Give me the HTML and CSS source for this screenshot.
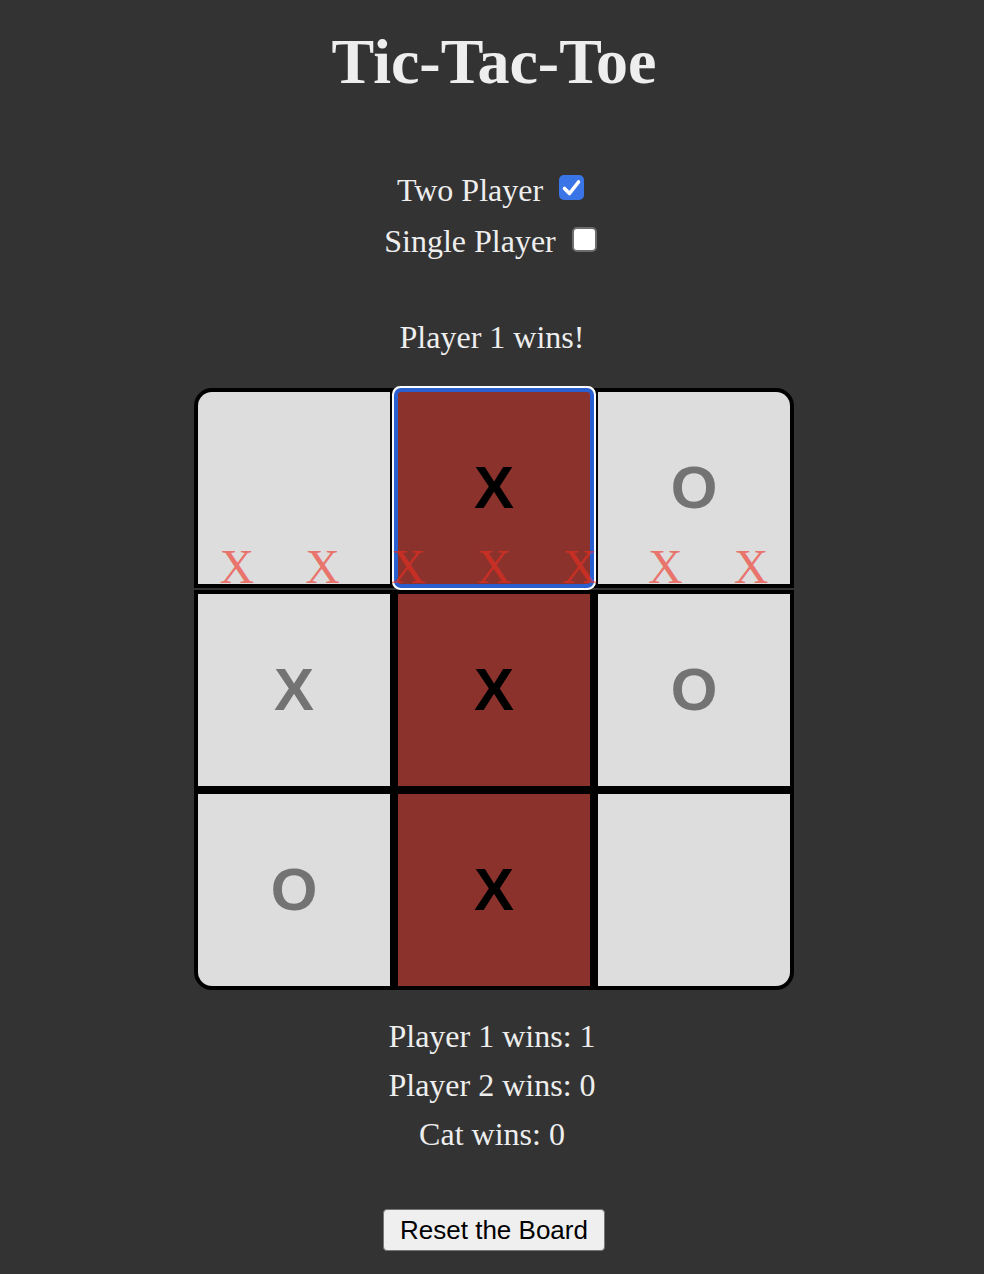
FILE: index.html
```html
<!DOCTYPE html>
<html lang="en">
<head>
<meta charset="utf-8">
<title>Tic-Tac-Toe</title>
<link rel="stylesheet" href="styles.css">
</head>
<body>
<main class="page">
  <h1 class="title">Tic-Tac-Toe</h1>

  <div class="modes">
    <label class="mode">
      <span class="mode-label">Two Player</span>
      <span class="box box-checked">
        <svg viewBox="0 0 25 25" width="25" height="25"><path d="M5.5 13.5 L10.5 18.5 L19.5 7" fill="none" stroke="#fff" stroke-width="3.6" stroke-linecap="round" stroke-linejoin="round"/></svg>
      </span>
    </label>
    <label class="mode">
      <span class="mode-label">Single Player</span>
      <span class="box box-empty"></span>
    </label>
  </div>

  <p class="status">Player 1 wins!</p>

  <div class="board">
    <div class="cell light tl"></div>
    <div class="cell win focused">X</div>
    <div class="cell light tr">O</div>
    <div class="sep sep-mark"></div>
    <div class="cell light">X</div>
    <div class="cell win">X</div>
    <div class="cell light">O</div>
    <div class="sep"></div>
    <div class="cell light bl">O</div>
    <div class="cell win">X</div>
    <div class="cell light br"></div>
    <div class="marks">
      <span>X</span><span>X</span><span>X</span><span>X</span><span>X</span><span>X</span><span>X</span>
    </div>
  </div>

  <div class="scores">
    <p class="score">Player 1 wins: 1</p>
    <p class="score">Player 2 wins: 0</p>
    <p class="score">Cat wins: 0</p>
  </div>

  <button class="reset" type="button">Reset the Board</button>
</main>
</body>
</html>
```

FILE: styles.css
```css
html, body {
  margin: 0;
  padding: 0;
  background: #333333;
}

body {
  font-family: "Liberation Serif", "Times New Roman", serif;
  color: #eeeeee;
}

.page {
  display: flex;
  flex-direction: column;
  align-items: center;
  padding-bottom: 20px;
}

.title {
  margin: 25px 0 0 4px;
  font-size: 64px;
  line-height: 74px;
  font-weight: bold;
  color: #eeeeee;
}

.modes {
  margin: 71px 3px 0 0;
  display: flex;
  flex-direction: column;
  align-items: center;
  gap: 11px;
}

.mode {
  display: flex;
  align-items: flex-start;
  height: 40px;
}

.mode-label {
  font-size: 32px;
  line-height: 40px;
}

.box {
  display: block;
  width: 25px;
  height: 25px;
  margin: 5px 0 0 16px;
  border-radius: 5px;
  box-sizing: border-box;
}

.box svg {
  display: block;
}

.box-checked {
  background: #3a75e8;
}

.box-empty {
  background: #ffffff;
  border: 2px solid #6d6d6d;
  margin-top: 6px;
}

.status {
  margin: 56px 0 0;
  font-size: 32px;
  line-height: 40px;
}

.board {
  position: relative;
  margin: 31px 0 0 4px;
  display: grid;
  grid-template-columns: 192px 192px 192px;
  grid-template-rows: 192px 10px 192px 8px 192px;
  column-gap: 8px;
  background: #000000;
  border: 4px solid #000000;
  border-radius: 18px;
}

.cell {
  display: flex;
  align-items: center;
  justify-content: center;
  font-family: "Liberation Sans", Arial, sans-serif;
  font-weight: bold;
  font-size: 60px;
  line-height: 60px;
}

.light {
  background: #dddddd;
  color: #737373;
}

.win {
  background: #8b322d;
  color: #000000;
}

.tl { border-top-left-radius: 14px; }
.tr { border-top-right-radius: 14px; }
.bl { border-bottom-left-radius: 14px; }
.br { border-bottom-right-radius: 14px; }

.focused {
  position: relative;
  z-index: 1;
  border-radius: 3px;
  box-shadow: 0 0 0 4px #2a5fcf, 0 0 0 6px #ffffff;
}

.sep {
  grid-column: 1 / -1;
}

.sep-mark {
  margin: 0 -4px;
  background: linear-gradient(#000 0, #000 4px, #333 4px, #333 6px, #000 6px, #000 10px);
}

.marks {
  position: absolute;
  z-index: 2;
  left: -4px;
  right: -4px;
  top: 151px;
  display: flex;
  font-family: "Liberation Serif", "Times New Roman", serif;
  font-size: 48px;
  line-height: 48px;
  color: rgba(240, 45, 30, 0.6);
  pointer-events: none;
}

.marks span {
  flex: 1;
  text-align: center;
}

.scores {
  margin-top: 26px;
  display: flex;
  flex-direction: column;
  align-items: center;
  gap: 9px;
}

.score {
  margin: 0;
  font-size: 32px;
  line-height: 40px;
}

.reset {
  margin: 55px 0 0 4px;
  padding: 5px 16px;
  font-family: "Liberation Sans", Arial, sans-serif;
  font-size: 26px;
  line-height: 30px;
  color: #000000;
  background: #efefef;
  border: 1px solid #767676;
  border-radius: 4px;
}
```
